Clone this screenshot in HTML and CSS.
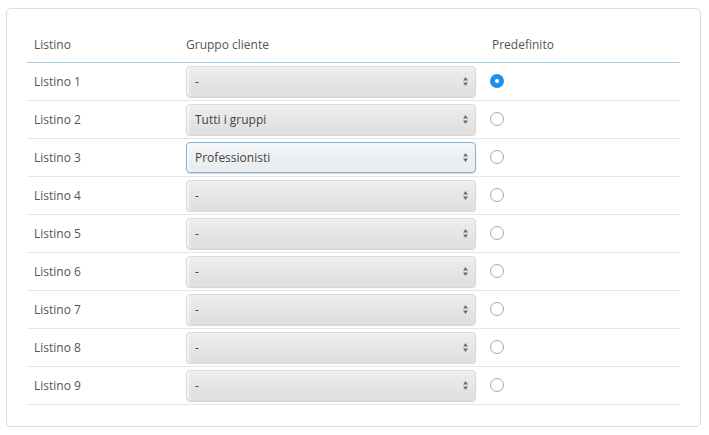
FILE: index.html
```html
<!DOCTYPE html>
<html>
<head>
    <link rel="stylesheet" href="styles.css">
</head>
<body>

    <div class="panel">
        <table class="price-table">
            <colgroup>
                <col class="col-name">
                <col class="col-group">
                <col class="col-default">
            </colgroup>
            <thead>
                <tr>
                    <th>Listino</th>
                    <th>Gruppo cliente</th>
                    <th class="th-default">Predefinito</th>
                </tr>
            </thead>
            <tbody>
                <tr>
                    <td>Listino 1</td>
                    <td>
                        <div class="select-wrap">
                            <select><option>-</option></select>
                            <svg class="arrows" width="7" height="11" viewBox="0 0 7 11"><path d="M3.5 1 L6 4.5 H1 Z M3.5 10 L6 6.5 H1 Z" fill="#6e6e6e"/></svg>
                        </div>
                    </td>
                    <td><span class="radio checked"></span></td>
                </tr>
                <tr>
                    <td>Listino 2</td>
                    <td>
                        <div class="select-wrap">
                            <select><option>Tutti i gruppi</option></select>
                            <svg class="arrows" width="7" height="11" viewBox="0 0 7 11"><path d="M3.5 1 L6 4.5 H1 Z M3.5 10 L6 6.5 H1 Z" fill="#6e6e6e"/></svg>
                        </div>
                    </td>
                    <td><span class="radio"></span></td>
                </tr>
                <tr>
                    <td>Listino 3</td>
                    <td>
                        <div class="select-wrap">
                            <select class="focused"><option>Professionisti</option></select>
                            <svg class="arrows" width="7" height="11" viewBox="0 0 7 11"><path d="M3.5 1 L6 4.5 H1 Z M3.5 10 L6 6.5 H1 Z" fill="#6e6e6e"/></svg>
                        </div>
                    </td>
                    <td><span class="radio"></span></td>
                </tr>
                <tr>
                    <td>Listino 4</td>
                    <td>
                        <div class="select-wrap">
                            <select><option>-</option></select>
                            <svg class="arrows" width="7" height="11" viewBox="0 0 7 11"><path d="M3.5 1 L6 4.5 H1 Z M3.5 10 L6 6.5 H1 Z" fill="#6e6e6e"/></svg>
                        </div>
                    </td>
                    <td><span class="radio"></span></td>
                </tr>
                <tr>
                    <td>Listino 5</td>
                    <td>
                        <div class="select-wrap">
                            <select><option>-</option></select>
                            <svg class="arrows" width="7" height="11" viewBox="0 0 7 11"><path d="M3.5 1 L6 4.5 H1 Z M3.5 10 L6 6.5 H1 Z" fill="#6e6e6e"/></svg>
                        </div>
                    </td>
                    <td><span class="radio"></span></td>
                </tr>
                <tr>
                    <td>Listino 6</td>
                    <td>
                        <div class="select-wrap">
                            <select><option>-</option></select>
                            <svg class="arrows" width="7" height="11" viewBox="0 0 7 11"><path d="M3.5 1 L6 4.5 H1 Z M3.5 10 L6 6.5 H1 Z" fill="#6e6e6e"/></svg>
                        </div>
                    </td>
                    <td><span class="radio"></span></td>
                </tr>
                <tr>
                    <td>Listino 7</td>
                    <td>
                        <div class="select-wrap">
                            <select><option>-</option></select>
                            <svg class="arrows" width="7" height="11" viewBox="0 0 7 11"><path d="M3.5 1 L6 4.5 H1 Z M3.5 10 L6 6.5 H1 Z" fill="#6e6e6e"/></svg>
                        </div>
                    </td>
                    <td><span class="radio"></span></td>
                </tr>
                <tr>
                    <td>Listino 8</td>
                    <td>
                        <div class="select-wrap">
                            <select><option>-</option></select>
                            <svg class="arrows" width="7" height="11" viewBox="0 0 7 11"><path d="M3.5 1 L6 4.5 H1 Z M3.5 10 L6 6.5 H1 Z" fill="#6e6e6e"/></svg>
                        </div>
                    </td>
                    <td><span class="radio"></span></td>
                </tr>
                <tr>
                    <td>Listino 9</td>
                    <td>
                        <div class="select-wrap">
                            <select><option>-</option></select>
                            <svg class="arrows" width="7" height="11" viewBox="0 0 7 11"><path d="M3.5 1 L6 4.5 H1 Z M3.5 10 L6 6.5 H1 Z" fill="#6e6e6e"/></svg>
                        </div>
                    </td>
                    <td><span class="radio"></span></td>
                </tr>
            </tbody>
        </table>
    </div>

</body>
</html>
```
FILE: styles.css
```css
body {
    font-family: "Open Sans", Arial, sans-serif;
    font-size: 12px;
    color: #555;
    background-color: #fff;
    margin: 0;
    padding: 8px 0 0 6px;
}

.panel {
    width: 653px;
    height: 379px;
    padding: 18px 20px 20px 20px;
    border: 1px solid #dcdcdc;
    border-radius: 5px;
    box-shadow: 0 1px 1px rgba(0, 0, 0, 0.04);
}

.price-table {
    width: 653px;
    border-collapse: collapse;
    table-layout: fixed;
}

.col-name {
    width: 152px;
}

.col-group {
    width: 304px;
}

.col-default {
    width: 197px;
}

.price-table th {
    font-weight: normal;
    text-align: left;
    height: 35px;
    padding: 0 7px;
    border-bottom: 1px solid #a9d0ea;
    box-sizing: border-box;
}

.price-table th.th-default {
    padding-left: 9px;
}

.price-table td {
    height: 38px;
    padding: 0 7px;
    border-bottom: 1px solid #e6e6e6;
    box-sizing: border-box;
    vertical-align: middle;
}

.select-wrap {
    position: relative;
    width: 290px;
    height: 31px;
}

.select-wrap select {
    -webkit-appearance: none;
    appearance: none;
    width: 100%;
    height: 31px;
    padding: 0 20px 0 8px;
    font-family: "Open Sans", Arial, sans-serif;
    font-size: 12px;
    color: #444;
    border: 1px solid #d9d9d9;
    border-radius: 4px;
    background: linear-gradient(#eeeeee, #dedede);
    box-shadow: 0 1px 1px rgba(0, 0, 0, 0.16), inset 2px 0 2px rgba(255, 255, 255, 0.7);
    outline: none;
}

.select-wrap select.focused {
    border-color: #86b1d6;
    background: linear-gradient(#f4f6f8, #e7ebee);
}

.arrows {
    position: absolute;
    right: 7px;
    top: 10px;
    pointer-events: none;
}

.radio {
    display: block;
    width: 14px;
    height: 14px;
    border: 1px solid #a8a8a8;
    border-radius: 50%;
    box-sizing: border-box;
    background-color: #fff;
}

.radio.checked {
    border: 5px solid #1e8fef;
    background-color: #fff;
}
```
